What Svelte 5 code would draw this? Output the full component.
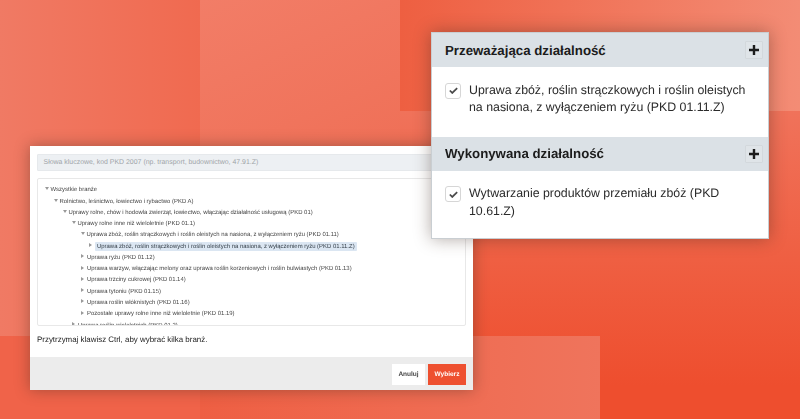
<script>
  const tree = [
    { t: 'Wszystkie branże', d: 0, open: true },
    { t: 'Rolnictwo, leśnictwo, łowiectwo i rybactwo (PKD A)', d: 1, open: true },
    { t: 'Uprawy rolne, chów i hodowla zwierząt, łowiectwo, włączając działalność usługową (PKD 01)', d: 2, open: true },
    { t: 'Uprawy rolne inne niż wieloletnie (PKD 01.1)', d: 3, open: true },
    { t: 'Uprawa zbóż, roślin strączkowych i roślin oleistych na nasiona, z wyłączeniem ryżu (PKD 01.11)', d: 4, open: true },
    { t: 'Uprawa zbóż, roślin strączkowych i roślin oleistych na nasiona, z wyłączeniem ryżu (PKD 01.11.Z)', d: 5, sel: true },
    { t: 'Uprawa ryżu (PKD 01.12)', d: 4 },
    { t: 'Uprawa warzyw, włączając melony oraz uprawa roślin korzeniowych i roślin bulwiastych (PKD 01.13)', d: 4 },
    { t: 'Uprawa trzciny cukrowej (PKD 01.14)', d: 4 },
    { t: 'Uprawa tytoniu (PKD 01.15)', d: 4 },
    { t: 'Uprawa roślin włóknistych (PKD 01.16)', d: 4 },
    { t: 'Pozostałe uprawy rolne inne niż wieloletnie (PKD 01.19)', d: 4 },
    { t: 'Uprawa roślin wieloletnich (PKD 01.2)', d: 3 }
  ];
  const groups = [
    { title: 'Przeważająca działalność', item: 'Uprawa zbóż, roślin strączkowych i roślin oleistych na nasiona, z wyłączeniem ryżu (PKD 01.11.Z)' },
    { title: 'Wykonywana działalność', item: 'Wytwarzanie produktów przemiału zbóż (PKD 10.61.Z)' }
  ];
</script>

<div class="stage">
  <div class="tile t1"></div>
  <div class="tile t2"></div>
  <div class="tile t3"></div>
  <div class="tile t4"></div>
  <div class="tile t5"></div>
  <div class="tile t6"></div>

  <section class="modal">
    <div class="modal-body">
      <div class="search">Słowa kluczowe, kod PKD 2007 (np. transport, budownictwo, 47.91.Z)</div>
      <div class="tree">
        {#each tree as n}
          <div class="row depth{n.d}">
            <span class={n.open ? 'arrow down' : 'arrow right'}></span>
            <span class={n.sel ? 'label sel' : 'label'}>{n.t}</span>
          </div>
        {/each}
      </div>
      <p class="hint">Przytrzymaj klawisz Ctrl, aby wybrać kilka branż.</p>
    </div>
    <div class="modal-foot">
      <button class="btn cancel">Anuluj</button>
      <button class="btn ok">Wybierz</button>
    </div>
  </section>

  <section class="panel">
    {#each groups as g}
      <div class="head">
        <h3>{g.title}</h3>
        <span class="plus">
          <svg viewBox="0 0 10 10" width="10" height="10"><path d="M5 0v10M0 5h10" stroke="#1c1c1c" stroke-width="2.4" fill="none"/></svg>
        </span>
      </div>
      <div class="item">
        <span class="check">
          <svg viewBox="0 0 10 8" width="9" height="7"><path d="M.8 4 3.6 6.8 9.2 1.4" stroke="#4a4a4a" stroke-width="2" fill="none"/></svg>
        </span>
        <span class="text">{g.item}</span>
      </div>
    {/each}
  </section>
</div>

<style>
  :global(body) { margin: 0; }
  .stage {
    position: relative;
    width: 800px;
    height: 419px;
    overflow: hidden;
    font-family: "Liberation Sans", Arial, sans-serif;
    text-rendering: geometricPrecision;
    background: linear-gradient(180deg, #f0745c 0%, #f0725a 27%, #ef5f42 62%, #ee4e2e 92%, #ee4e2e 100%);
  }
  .tile { position: absolute; }
  .t1 { left: 0; top: 0; width: 200px; height: 336px; background: linear-gradient(90deg, #f07a64, #f06a50); }
  .t2 { left: 200px; top: 0; width: 200px; height: 336px; background: linear-gradient(155deg, #f27d67 0%, #ef6f56 60%, #ee6449 100%); }
  .t3 { left: 400px; top: 0; width: 400px; height: 111px; background: linear-gradient(90deg, #ee5f41, #f38c75); }
  .t4 { left: 400px; top: 336px; width: 200px; height: 83px; background: linear-gradient(90deg, #ef6a50, #ef745c); }
  .t5 { left: 0; top: 336px; width: 200px; height: 83px; background: #f06349; }
  .t6 { left: 200px; top: 336px; width: 200px; height: 83px; background: linear-gradient(90deg, #ee5f43, #ef6a50); }

  .modal {
    position: absolute;
    left: 30px;
    top: 146px;
    width: 443px;
    height: 244px;
    display: flex;
    flex-direction: column;
    background: #fff;
    box-shadow: 0 0 14px rgba(60, 40, 30, 0.42);
    filter: blur(0.35px);
  }
  .modal-body { flex: 1; display: flex; flex-direction: column; padding: 8px 7px 0; min-height: 0; }
  .search {
    height: 17px;
    line-height: 16px;
    box-sizing: border-box;
    padding-left: 5.5px;
    background: #edf0f3;
    border: 1px solid #e6e9ec;
    font-size: 6.94px;
    color: #a0a4a8;
    border-radius: 1px;
  }
  .tree {
    margin-top: 7px;
    height: 148px;
    padding: 5.7px 0 0 7px;
    border: 1px solid #e8e8e8;
    border-radius: 2px;
    overflow: hidden;
    box-sizing: border-box;
  }
  .row { height: 11.27px; display: flex; align-items: center; font-size: 5.95px; color: #444; white-space: nowrap; }
  .depth1 { padding-left: 9px; }
  .depth2 { padding-left: 18px; }
  .depth3 { padding-left: 27px; }
  .depth4 { padding-left: 36px; }
  .depth5 { padding-left: 44px; }
  .arrow { width: 0; height: 0; margin-right: 1.5px; flex: none; margin-top: -3px; }
  .arrow.down { border-left: 2.5px solid transparent; border-right: 2.5px solid transparent; border-top: 3px solid #999; }
  .arrow.right { border-top: 2.5px solid transparent; border-bottom: 2.5px solid transparent; border-left: 3px solid #999; margin-right: 3px; }
  .label.sel { background: #dbe6f2; padding: 1.5px 2px; border-radius: 1px; color: #36404a; }
  .hint { margin: 9px 0 0; font-size: 7.93px; color: #222; }
  .modal-foot {
    height: 33px;
    box-sizing: border-box;
    padding: 1px 7px 0;
    background: #ececec;
    display: flex;
    justify-content: flex-end;
    align-items: center;
    gap: 3px;
  }
  .btn {
    height: 21px;
    border: 0;
    padding: 0;
    margin: 0;
    font: bold 6.5px "Liberation Sans", Arial, sans-serif;
    text-rendering: geometricPrecision;
    border-radius: 0;
  }
  .cancel { width: 33px; background: #fff; color: #444; }
  .ok { width: 38px; background: #ee5030; color: #fff; }

  .panel {
    position: absolute;
    left: 431px;
    top: 32px;
    width: 338px;
    height: 207px;
    box-sizing: border-box;
    border: 1px solid #c9ced2;
    background: #fff;
    box-shadow: 0 0 16px rgba(60, 40, 30, 0.4);
    filter: blur(0.35px);
  }
  .head {
    height: 34.4px;
    background: #dbe1e6;
    display: flex;
    align-items: center;
    justify-content: space-between;
    padding: 0 5px 0 13px;
  }
  .head h3 { margin: 0; font-size: 13.27px; font-weight: bold; color: #1c1c1c; }
  .plus {
    width: 18px;
    height: 18px;
    box-sizing: border-box;
    display: flex;
    align-items: center;
    justify-content: center;
    background: #dfe4e8;
    border: 1px solid #d3d8dc;
    border-radius: 1px;
  }
  .item {
    height: 69.2px;
    box-sizing: border-box;
    padding: 14.4px 13px 0 13px;
    display: flex;
    gap: 8px;
    font-size: 12.35px;
    line-height: 17.5px;
    color: #2a2a2a;
  }
  .check {
    width: 16px;
    height: 16px;
    box-sizing: border-box;
    flex: none;
    margin-top: 1px;
    display: flex;
    align-items: center;
    justify-content: center;
    border: 1px solid #d6d6d6;
    border-radius: 3px;
    background: #fff;
  }
</style>
